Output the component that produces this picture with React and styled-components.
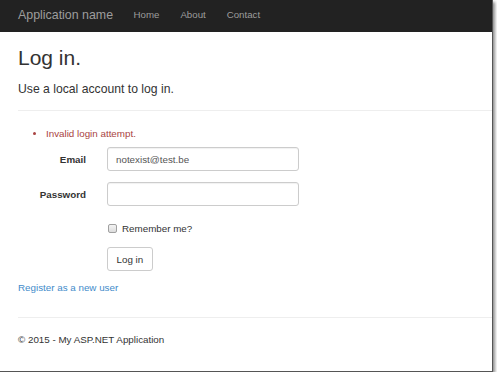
import React from 'react';
import styled, { createGlobalStyle } from 'styled-components';

const GlobalStyle = createGlobalStyle`
  html, body {
    margin: 0;
    padding: 0;
    background: #fff;
    overflow: hidden;
  }
  body {
    font-family: "Liberation Sans", Arial, sans-serif;
    font-size: 9.8px;
    color: #333;
  }
  * {
    box-sizing: border-box;
  }
`;

const App = () => {
  return (
    <>
      <GlobalStyle />
      <Frame>
        <Navbar>
          <Brand href="#">Application name</Brand>
          <NavList>
            <NavItem href="#">Home</NavItem>
            <NavItem href="#">About</NavItem>
            <NavItem href="#">Contact</NavItem>
          </NavList>
        </Navbar>

        <Body>
          <Title>Log in.</Title>
          <Subtitle>Use a local account to log in.</Subtitle>
          <Rule />

          <Errors>
            <li>Invalid login attempt.</li>
          </Errors>

          <Form>
            <FormRow>
              <Label htmlFor="email">Email</Label>
              <Input id="email" type="text" defaultValue="notexist@test.be" />
            </FormRow>
            <FormRow>
              <Label htmlFor="password">Password</Label>
              <Input id="password" type="password" />
            </FormRow>
            <CheckRow>
              <span />
              <CheckLabel>
                <Checkbox type="checkbox" />
                Remember me?
              </CheckLabel>
            </CheckRow>
            <ButtonRow>
              <span />
              <Button type="button">Log in</Button>
            </ButtonRow>
          </Form>

          <RegisterLink href="#">Register as a new user</RegisterLink>

          <FooterRule />
          <Footer>© 2015 - My ASP.NET Application</Footer>
        </Body>
      </Frame>
    </>
  );
};

export default App;

const Frame = styled.div`
  width: 493px;
  height: 372px;
  background: #fff;
  border-right: 1px solid #555;
  border-bottom: 1px solid #555;
  box-shadow: 2px 2px 3px rgba(0, 0, 0, 0.45);
  overflow: hidden;
`;

const Navbar = styled.nav`
  display: flex;
  align-items: center;
  height: 32px;
  padding: 0 0 3px 18px;
  background: #222;
`;

const Brand = styled.a`
  font-size: 12.4px;
  color: #9d9d9d;
  text-decoration: none;
  margin-right: 10px;
`;

const NavList = styled.div`
  display: flex;
`;

const NavItem = styled.a`
  font-size: 9.7px;
  color: #9d9d9d;
  text-decoration: none;
  padding: 0 10.5px;
`;

const Body = styled.div`
  display: flex;
  flex-direction: column;
  align-items: flex-start;
  padding-left: 18px;
`;

const Title = styled.h2`
  margin: 14px 0 0;
  font-size: 21px;
  font-weight: 400;
  line-height: 23px;
`;

const Subtitle = styled.h4`
  margin: 14px 0 0;
  font-size: 12.2px;
  font-weight: 400;
  line-height: 13px;
`;

const Rule = styled.hr`
  align-self: stretch;
  margin: 14px 0 0;
  border: 0;
  border-top: 1px solid #eee;
`;

const Errors = styled.ul`
  margin: 16px 0 0;
  padding-left: 28px;
  color: #a94442;
  line-height: 14px;
`;

const Form = styled.div`
  display: flex;
  flex-direction: column;
  margin-top: 6px;
`;

const FormRow = styled.div`
  display: grid;
  grid-template-columns: 68px 192px;
  column-gap: 21px;
  align-items: center;
  margin-bottom: 11px;
`;

const CheckRow = styled(FormRow)`
  height: 22px;
  margin-bottom: 8px;
`;

const ButtonRow = styled(FormRow)`
  margin-bottom: 0;
`;

const Label = styled.label`
  text-align: right;
  font-weight: 700;
`;

const Input = styled.input`
  height: 24px;
  width: 192px;
  padding: 0 8px;
  font-family: inherit;
  font-size: 9.8px;
  color: #555;
  border: 1px solid #ccc;
  border-radius: 3px;
  box-shadow: inset 0 1px 1px rgba(0, 0, 0, 0.06);
  outline: none;
`;

const CheckLabel = styled.label`
  display: flex;
  align-items: center;
  gap: 5px;
`;

const Checkbox = styled.input`
  appearance: none;
  width: 9px;
  height: 9px;
  margin: 0 0 0 1px;
  border: 1px solid #a0a0a0;
  border-radius: 2px;
  background: linear-gradient(#f4f4f4, #dcdcdc);
`;

const Button = styled.button`
  justify-self: start;
  height: 24px;
  padding: 0 8.5px;
  font-family: inherit;
  font-size: 9.8px;
  color: #333;
  background: #fff;
  border: 1px solid #ccc;
  border-radius: 3px;
`;

const RegisterLink = styled.a`
  margin-top: 10px;
  line-height: 14px;
  color: #428bca;
  text-decoration: none;
`;

const FooterRule = styled(Rule)`
  margin-top: 22px;
`;

const Footer = styled.p`
  margin: 15px 0 0;
  line-height: 14px;
`;
